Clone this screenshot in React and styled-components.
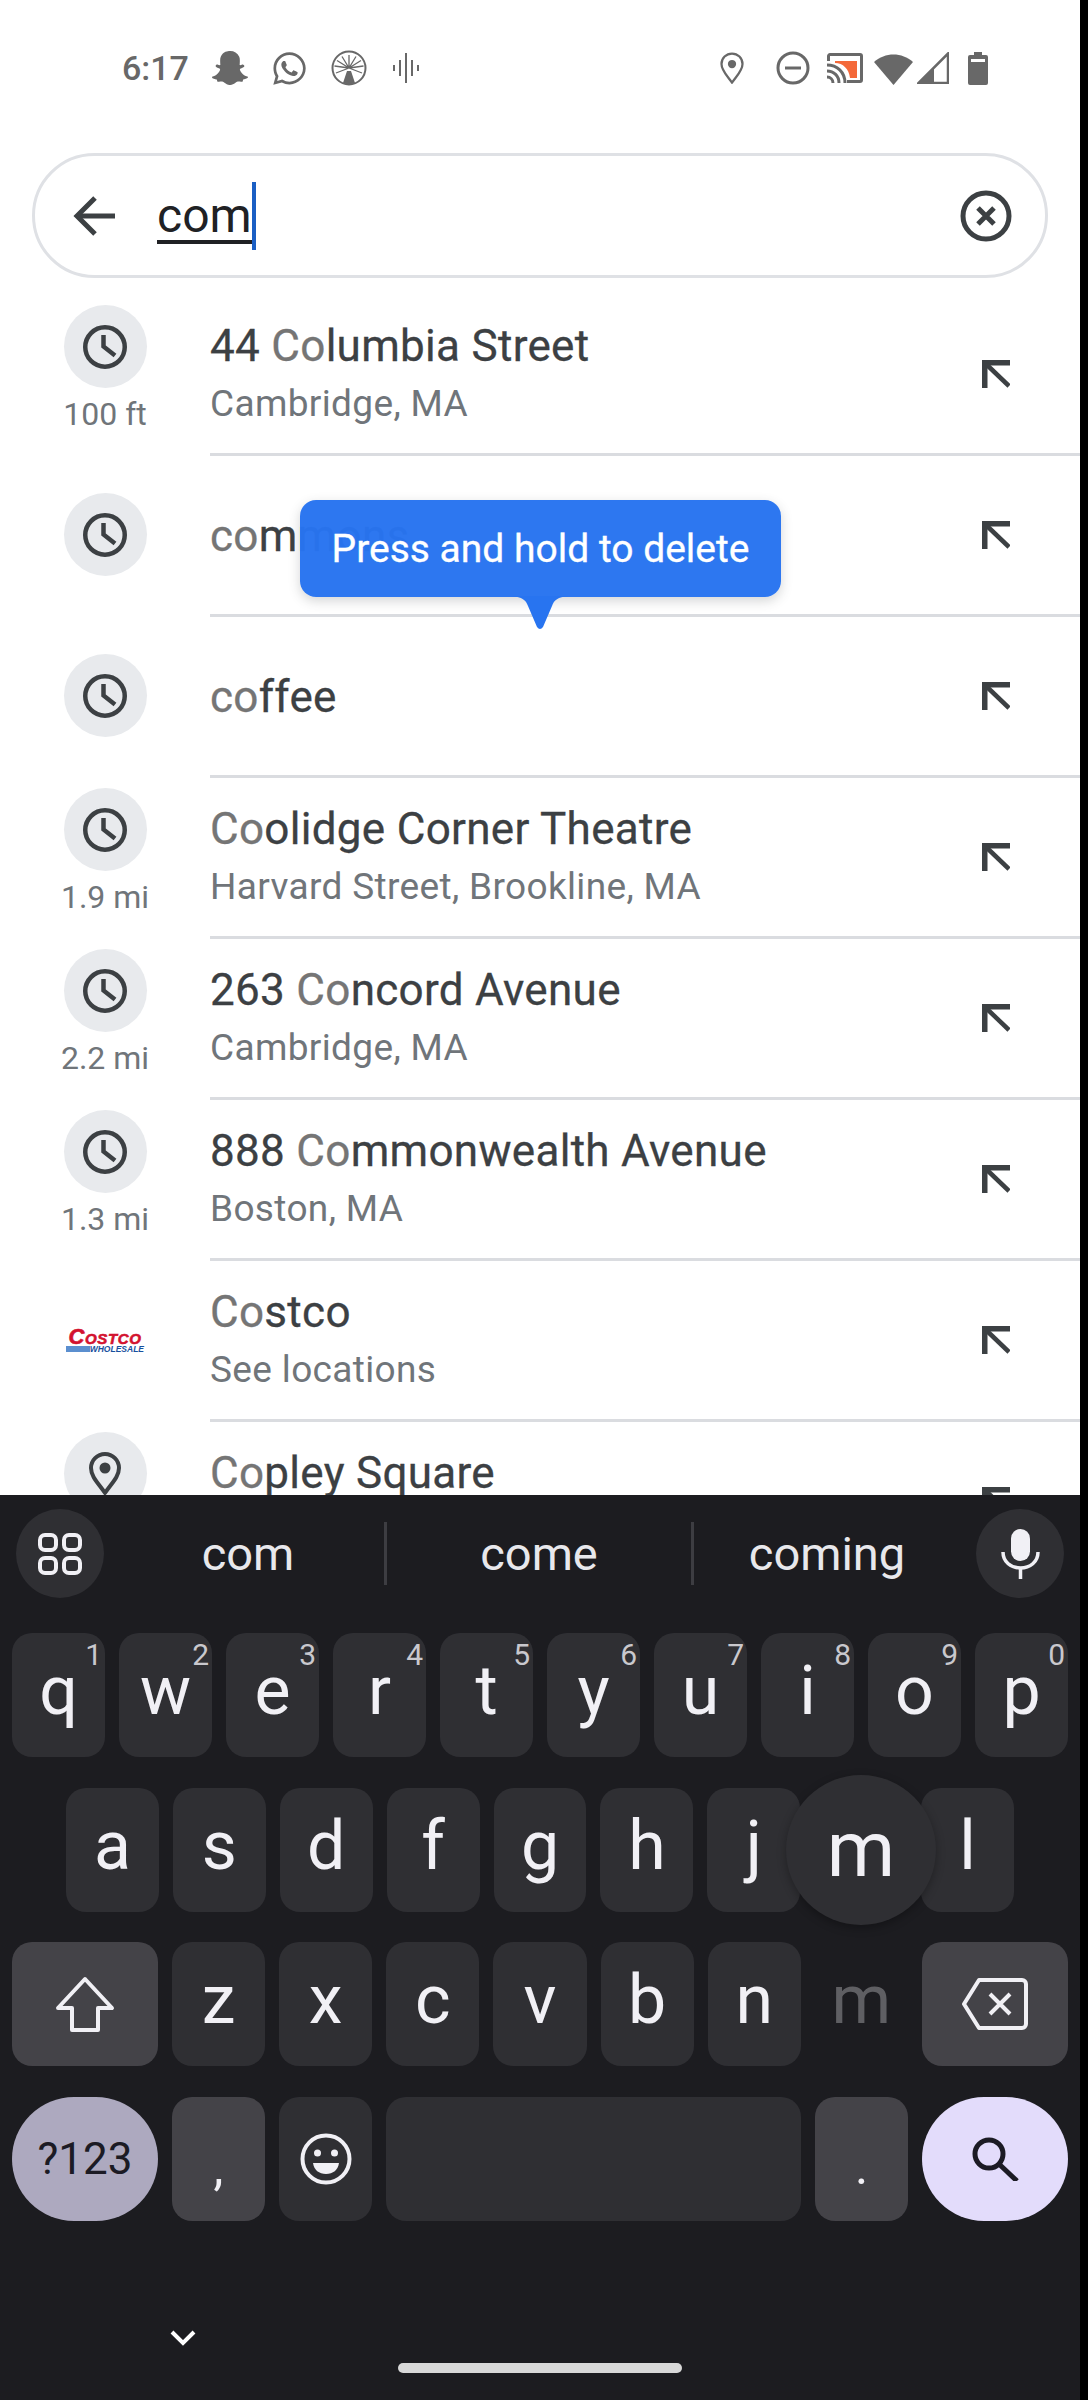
import React from 'react'
import styled, { createGlobalStyle } from 'styled-components'
import { FaSnapchatGhost, FaWhatsapp } from 'react-icons/fa'

const Global = createGlobalStyle`
  html, body { margin: 0; padding: 0; background: #000; }
  * { box-sizing: border-box; }
`

const Phone = styled.div`
  position: relative;
  width: 1080px;
  height: 2400px;
  overflow: hidden;
  background: #fff;
  font-family: Roboto, "Noto Sans", sans-serif;
`

const StatusBar = styled.div`
  height: 134px;
  padding: 50px 92px 0 122px;
  display: flex;
  justify-content: space-between;
  align-items: flex-start;
  color: #686868;
`
const StatusGroup = styled.div`
  height: 36px;
  display: flex;
  align-items: center;
  gap: ${p => p.$gap || 0}px;
`
const StatusSlot = styled.div`
  margin-left: ${p => p.$left || 0}px;
  display: flex;
`
const Time = styled.span`
  font-size: 34px;
  font-weight: 500;
`

const SearchPill = styled.div`
  margin: 19px 32px 0;
  height: 125px;
  border: 3px solid #dfe1e5;
  border-radius: 63px;
  display: flex;
  align-items: center;
  padding: 0 33px 0 38px;
`
const SearchText = styled.div`
  flex: 1;
  margin-left: 42px;
  display: flex;
  align-items: center;
  height: 68px;
`
const Typed = styled.span`
  font-size: 48px;
  line-height: 60px;
  height: 58px;
  color: #202124;
  border-bottom: 4px solid #202124;
  margin-top: -2px;
`
const Caret = styled.span`
  width: 4px;
  height: 68px;
  background: #1a5fc4;
`

const List = styled.div`
  margin-top: 17px;
  height: 1200px;
  overflow: hidden;
`
const Row = styled.div`
  height: 161px;
  display: flex;
`
const Lead = styled.div`
  width: 210px;
  flex: none;
  display: flex;
  flex-direction: column;
  align-items: center;
  padding-top: ${p => p.$top}px;
`
const IconDisc = styled.div`
  width: 83px;
  height: 83px;
  flex: none;
  border-radius: 50%;
  background: #e8eaed;
  display: flex;
  align-items: center;
  justify-content: center;
  color: #3c4043;
`
const Distance = styled.div`
  margin-top: 4px;
  font-size: 32px;
  line-height: 44px;
  color: #70757a;
`
const RowBody = styled.div`
  flex: 1;
  display: flex;
  align-items: center;
  padding-right: 70px;
  border-bottom: 3px solid #dadce0;
`
const RowText = styled.div`
  flex: 1;
  min-width: 0;
  margin-top: 2px;
`
const Title = styled.div`
  font-size: 44px;
  line-height: 58px;
  letter-spacing: 0.3px;
  color: #3c4043;
  -webkit-text-stroke: 0.3px currentColor;
`
const Match = styled.span`
  color: #757575;
`
const Sub = styled.div`
  font-size: 37px;
  line-height: 58px;
  letter-spacing: 0.35px;
  color: #70757a;
`

const Logo = styled.div`
  width: 78px;
  margin-top: 31px;
  display: flex;
  flex-direction: column;
  font-family: "Liberation Sans", sans-serif;
  font-style: italic;
  font-weight: 700;
`
const LogoTop = styled.div`
  font-size: 22px;
  font-variant: small-caps;
  line-height: 15px;
  letter-spacing: 0.6px;
  color: #d3122f;
  text-align: center;
  white-space: nowrap;
  -webkit-text-stroke: 0.6px #d3122f;
`
const LogoBottom = styled.div`
  margin-top: 2px;
  height: 6px;
  display: flex;
  align-items: center;
`
const LogoBar = styled.div`
  width: 24px;
  height: 6px;
  background: #5b8fcf;
`
const LogoWord = styled.div`
  font-size: 8.5px;
  line-height: 6px;
  color: #17509e;
`

const Tooltip = styled.div`
  position: absolute;
  left: 300px;
  top: 500px;
  width: 481px;
  height: 97px;
  border-radius: 16px;
  background: rgba(40, 116, 240, 0.975);
  box-shadow: 0 4px 12px rgba(60, 64, 67, 0.22);
  color: #fff;
  font-size: 39px;
  display: flex;
  align-items: center;
  justify-content: center;
  -webkit-text-stroke: 0.3px #fff;
`
const TooltipTail = styled.svg`
  position: absolute;
  left: 212px;
  top: 96px;
`

const Keyboard = styled.div`
  position: relative;
  height: 905px;
  background: #1c1c20;
  color: #f1f0f5;
`
const Strip = styled.div`
  height: 138px;
  padding: 14px 16px 0;
  display: flex;
  align-items: flex-start;
`
const StripButton = styled.div`
  width: 88px;
  height: 89px;
  flex: none;
  border-radius: 50%;
  background: #2f2f33;
  display: flex;
  align-items: center;
  justify-content: center;
`
const Suggestions = styled.div`
  flex: 1;
  height: 89px;
  display: flex;
  align-items: center;
`
const Suggestion = styled.div`
  flex: ${p => p.$width}px 0 0;
  height: 63px;
  padding-left: ${p => p.$padLeft || 0}px;
  padding-right: ${p => p.$padRight || 0}px;
  border-right: ${p => (p.$last ? 'none' : '3px solid #3d3d42')};
  display: flex;
  align-items: center;
  justify-content: center;
  font-size: 47px;
  color: #e8e8ec;
`
const Keys = styled.div`
  padding: 0 12px;
  display: flex;
  flex-direction: column;
  gap: 30.7px;
`
const KeyRow = styled.div`
  height: 124px;
  padding: 0 ${p => p.$inset || 0}px;
  display: flex;
  gap: 14px;
`
const Key = styled.div`
  position: relative;
  flex: ${p => (p.$width ? `0 0 ${p.$width}px` : '1 1 0')};
  min-width: 0;
  border-radius: ${p => (p.$pill ? 62 : 20)}px;
  background: ${p => p.$bg || '#2f2f33'};
  color: ${p => p.$color || '#f1f0f5'};
  font-size: ${p => p.$size || 68}px;
  line-height: 1;
  display: flex;
  align-items: center;
  justify-content: center;
`
const LetterKey = styled(Key)`
  padding-bottom: 8px;
`
const PunctuationKey = styled(Key)`
  padding-top: 16px;
  font-size: 50px;
`
const Hint = styled.span`
  position: absolute;
  top: 5px;
  right: 3px;
  font-size: 30px;
  line-height: 34px;
  color: #c9c8cd;
`
const PopupKey = styled.div`
  position: absolute;
  left: 786px;
  top: 280px;
  width: 150px;
  height: 150px;
  border-radius: 50%;
  background: #2f2f33;
  box-shadow: 0 3px 10px rgba(0, 0, 0, 0.3);
  font-size: 78px;
  line-height: 1;
  display: flex;
  align-items: center;
  justify-content: center;
`
const KeyboardFoot = styled.div`
  padding-top: 109px;
`
const HideKeyboard = styled.div`
  height: 16px;
  padding-left: 170px;
  display: flex;
`
const HomeBar = styled.div`
  width: 284px;
  height: 10px;
  margin: 17px auto 0;
  border-radius: 5px;
  background: #d8d8d8;
`

const Clock = () => (
  <svg width="44" height="44" viewBox="0 0 44 44" fill="none" stroke="currentColor" strokeWidth="4.5">
    <circle cx="22" cy="22" r="19.750" />
    <path d="M20.5 10V21.500L32 30.500" />
  </svg>
)

const Pin = ({ w = 32, h = 44, sw = 4, color = 'currentColor' }) => (
  <svg width={w} height={h} viewBox="0 0 32 44" fill="none" stroke={color} strokeWidth={sw}>
    <path d="M16 41C10 32 2 25 2 16a14 14 0 0 1 28 0c0 9-8 16-14 25z" strokeLinejoin="round" />
    <circle cx="16" cy="16" r="5.5" fill={color} stroke="none" />
  </svg>
)

const Fill = () => (
  <svg width="28" height="28" viewBox="0 0 28 28" fill="none" stroke="#3c4043" strokeWidth="5.500">
    <path d="M28 2.750H2.750V28" />
    <path d="M4 4L27 26" strokeWidth="4.500" />
  </svg>
)

const BackArrow = () => (
  <svg width="42" height="42" viewBox="0 0 42 42" fill="none" stroke="#3c4043" strokeWidth="5">
    <path d="M42 21H5" />
    <path d="M22 3L4 21L22 39" />
  </svg>
)

const ClearIcon = () => (
  <svg width="52" height="52" viewBox="0 0 52 52" fill="none" stroke="#3c4043" strokeWidth="5">
    <circle cx="26" cy="26" r="23" />
    <path d="M18 18L34 34M34 18L18 34" />
  </svg>
)

const RayBadge = () => (
  <svg width="36" height="36" viewBox="0 0 36 36" fill="none" stroke="#686868">
    <circle cx="18" cy="18" r="16.5" strokeWidth="2" />
    <path
      d="M18 18V5M18 18L11 6.500M18 18L25 6.500M18 18L6 10.500M18 18L30 10.500M18 18L3.500 16M18 18L32.500 16M18 18L5 23M18 18L31 23"
      strokeWidth="1.300"
    />
    <path d="M12 33L16 21H20L24 33A16 16 0 0 1 12 33z" fill="#686868" stroke="none" />
  </svg>
)

const Wave = () => (
  <svg width="26" height="30" viewBox="0 0 26 30" stroke="#686868" strokeWidth="2">
    <path d="M1 12V18M7 7V23M13 0V30M19 7V23M25 12V18" />
  </svg>
)

const Dnd = () => (
  <svg width="34" height="34" viewBox="0 0 34 34" fill="none" stroke="#686868" strokeWidth="3">
    <circle cx="17" cy="17" r="15" />
    <path d="M9 17H25" />
  </svg>
)

const Cast = () => (
  <svg width="36" height="30" viewBox="0 0 36 30" fill="none">
    <path d="M1.500 8V3a1.500 1.500 0 0 1 1.500-1.500h30a1.500 1.500 0 0 1 1.500 1.500v24a1.500 1.500 0 0 1-1.500 1.500H20" stroke="#686868" strokeWidth="3" />
    <path d="M8 8H30V25H23C22 16 16 10 8 10z" fill="#f4693a" />
    <path d="M0 12C10 12 18 19 18 30M0 18C7 18 12 23 12 30M0 24C3.500 24 6 26.500 6 30" stroke="#686868" strokeWidth="3" />
  </svg>
)

const Wifi = () => (
  <svg width="39" height="33" viewBox="0 0 39 33">
    <path d="M0 10C11 0 28 0 39 10L19.500 33z" fill="#686868" />
  </svg>
)

const Signal = () => (
  <svg width="32" height="32" viewBox="0 0 32 32" fill="none">
    <path d="M31 1.500V31H1.500z" stroke="#686868" strokeWidth="2.500" />
    <path d="M0 32L17 15V32z" fill="#686868" />
  </svg>
)

const Battery = () => (
  <svg width="20" height="33" viewBox="0 0 20 33">
    <path d="M6 0H14V3H18a2 2 0 0 1 2 2V31a2 2 0 0 1-2 2H2a2 2 0 0 1-2-2V5a2 2 0 0 1 2-2H6z" fill="#686868" />
    <rect x="3" y="7" width="14" height="3" fill="#fff" />
  </svg>
)

const GridIcon = () => (
  <svg width="44" height="42" viewBox="0 0 44 42" fill="none" stroke="#f1f0f5" strokeWidth="4">
    <rect x="2" y="2" width="16" height="15" rx="5" />
    <rect x="26" y="2" width="16" height="15" rx="5" />
    <rect x="2" y="25" width="16" height="15" rx="5" />
    <rect x="26" y="25" width="16" height="15" rx="5" />
  </svg>
)

const MicIcon = () => (
  <svg width="39" height="50" viewBox="0 0 39 50" fill="none">
    <rect x="10" y="0" width="19" height="32" rx="9.500" fill="#f1f0f5" />
    <path d="M2 23C2 33 10 39 19.500 39S37 33 37 23" stroke="#f1f0f5" strokeWidth="3.500" />
    <path d="M19.500 38V50" stroke="#f1f0f5" strokeWidth="3.500" />
  </svg>
)

const ShiftIcon = () => (
  <svg width="60" height="57" viewBox="0 0 60 57" fill="none" stroke="#f1f0f5" strokeWidth="4">
    <path d="M30 3L57 32H43V54H17V32H3z" strokeLinejoin="round" />
  </svg>
)

const BackspaceIcon = () => (
  <svg width="66" height="52" viewBox="0 0 66 52" fill="none" stroke="#f1f0f5" strokeWidth="4">
    <path d="M17 2H60a4 4 0 0 1 4 4V46a4 4 0 0 1-4 4H17L2 26z" strokeLinejoin="round" />
    <path d="M28 16L48 36M48 16L28 36" />
  </svg>
)

const EmojiIcon = () => (
  <svg width="52" height="52" viewBox="0 0 52 52" fill="none">
    <circle cx="26" cy="26" r="23.500" stroke="#f1f0f5" strokeWidth="4" />
    <circle cx="17.500" cy="20" r="3.500" fill="#f1f0f5" />
    <circle cx="34.500" cy="20" r="3.500" fill="#f1f0f5" />
    <path d="M13 30H39C38 37 33 41 26 41S14 37 13 30z" fill="#f1f0f5" />
  </svg>
)

const SearchIcon = () => (
  <svg width="47" height="44" viewBox="0 0 47 44" fill="none" stroke="#1c1b24" strokeWidth="5">
    <circle cx="17" cy="17" r="14" />
    <path d="M27 27L45 44" />
  </svg>
)

const Chevron = () => (
  <svg width="26" height="16" viewBox="0 0 26 16" fill="none" stroke="#fff" strokeWidth="4">
    <path d="M2 2L13 13L24 2" />
  </svg>
)

// "rest" is the part of the title before the matched letters, which show lighter
const places = [
  { rest: '44 ', match: 'Co', tail: 'lumbia Street', sub: 'Cambridge, MA', distance: '100 ft' },
  { match: 'co', tail: 'mmons' },
  { match: 'co', tail: 'ffee' },
  { match: 'Co', tail: 'olidge Corner Theatre', sub: 'Harvard Street, Brookline, MA', distance: '1.9 mi' },
  { rest: '263 ', match: 'Co', tail: 'ncord Avenue', sub: 'Cambridge, MA', distance: '2.2 mi' },
  { rest: '888 ', match: 'Co', tail: 'mmonwealth Avenue', sub: 'Boston, MA', distance: '1.3 mi' },
  { match: 'Co', tail: 'stco', sub: 'See locations', logo: true },
  { match: 'Co', tail: 'pley Square', sub: '\u00a0', pin: true },
]

const PlaceRow = ({ place }) => {
  const { match, rest, tail, sub, distance, logo, pin } = place
  const top = distance || pin ? 10 : 37
  return (
    <Row>
      <Lead $top={top}>
        {logo ? (
          <Logo>
            <LogoTop>Costco</LogoTop>
            <LogoBottom>
              <LogoBar />
              <LogoWord>WHOLESALE</LogoWord>
            </LogoBottom>
          </Logo>
        ) : (
          <IconDisc>{pin ? <Pin /> : <Clock />}</IconDisc>
        )}
        {distance && <Distance>{distance}</Distance>}
      </Lead>
      <RowBody>
        <RowText>
          <Title>
            {rest}
            <Match>{match}</Match>
            {tail}
          </Title>
          {sub && <Sub>{sub}</Sub>}
        </RowText>
        <Fill />
      </RowBody>
    </Row>
  )
}

const topRow = [['q', 1], ['w', 2], ['e', 3], ['r', 4], ['t', 5], ['y', 6], ['u', 7], ['i', 8], ['o', 9], ['p', 0]]
const homeRow = ['a', 's', 'd', 'f', 'g', 'h', 'j', 'k', 'l']
const lowRow = ['z', 'x', 'c', 'v', 'b', 'n']

const App = () => (
  <Phone>
    <Global />
    <StatusBar>
      <StatusGroup $gap={23}>
        <Time>6:17</Time>
        <FaSnapchatGhost size={36} />
        <FaWhatsapp size={37} />
        <RayBadge />
        <StatusSlot $left={3}>
          <Wave />
        </StatusSlot>
      </StatusGroup>
      <StatusGroup>
        <Pin w={24} h={33} sw={3} color="#686868" />
        <StatusSlot $left={32}>
          <Dnd />
        </StatusSlot>
        <StatusSlot $left={17}>
          <Cast />
        </StatusSlot>
        <StatusSlot $left={11}>
          <Wifi />
        </StatusSlot>
        <StatusSlot $left={4}>
          <Signal />
        </StatusSlot>
        <StatusSlot $left={19}>
          <Battery />
        </StatusSlot>
      </StatusGroup>
    </StatusBar>

    <SearchPill>
      <BackArrow />
      <SearchText>
        <Typed>com</Typed>
        <Caret />
      </SearchText>
      <ClearIcon />
    </SearchPill>

    <List>
      {places.map(place => (
        <PlaceRow key={place.tail} place={place} />
      ))}
    </List>

    <Tooltip>
      Press and hold to delete
      <TooltipTail width="56" height="34" viewBox="0 0 56 34">
        <path d="M0 0H56C46 1 42 4 40 10L31 31Q28 35 25 31L16 10C14 4 10 1 0 0z" fill="#2874f0" />
      </TooltipTail>
    </Tooltip>

    <Keyboard>
      <Strip>
        <StripButton>
          <GridIcon />
        </StripButton>
        <Suggestions>
          <Suggestion $width={283} $padLeft={8}>com</Suggestion>
          <Suggestion $width={307}>come</Suggestion>
          <Suggestion $width={282} $last $padRight={16}>coming</Suggestion>
        </Suggestions>
        <StripButton>
          <MicIcon />
        </StripButton>
      </Strip>
      <Keys>
        <KeyRow>
          {topRow.map(([letter, hint]) => (
            <LetterKey key={letter}>
              {letter}
              <Hint>{hint}</Hint>
            </LetterKey>
          ))}
        </KeyRow>
        <KeyRow $inset={54}>
          {homeRow.map(letter => (
            <LetterKey key={letter}>{letter === 'k' ? '' : letter}</LetterKey>
          ))}
        </KeyRow>
        <KeyRow>
          <Key $width={146} $bg="#444348">
            <ShiftIcon />
          </Key>
          {lowRow.map(letter => (
            <LetterKey key={letter}>{letter}</LetterKey>
          ))}
          <LetterKey $bg="transparent" $color="#5f5f63">m</LetterKey>
          <Key $width={146} $bg="#444348">
            <BackspaceIcon />
          </Key>
        </KeyRow>
        <KeyRow>
          <Key $width={146} $pill $bg="#ada9bf" $color="#1c1b24" $size={44}>?123</Key>
          <PunctuationKey $width={93} $bg="#444348">,</PunctuationKey>
          <Key $width={93}>
            <EmojiIcon />
          </Key>
          <Key />
          <PunctuationKey $width={93} $bg="#444348">.</PunctuationKey>
          <Key $width={146} $pill $bg="#e3dcfb">
            <SearchIcon />
          </Key>
        </KeyRow>
      </Keys>
      <PopupKey>m</PopupKey>
      <KeyboardFoot>
        <HideKeyboard>
          <Chevron />
        </HideKeyboard>
        <HomeBar />
      </KeyboardFoot>
    </Keyboard>
  </Phone>
)

export default App
